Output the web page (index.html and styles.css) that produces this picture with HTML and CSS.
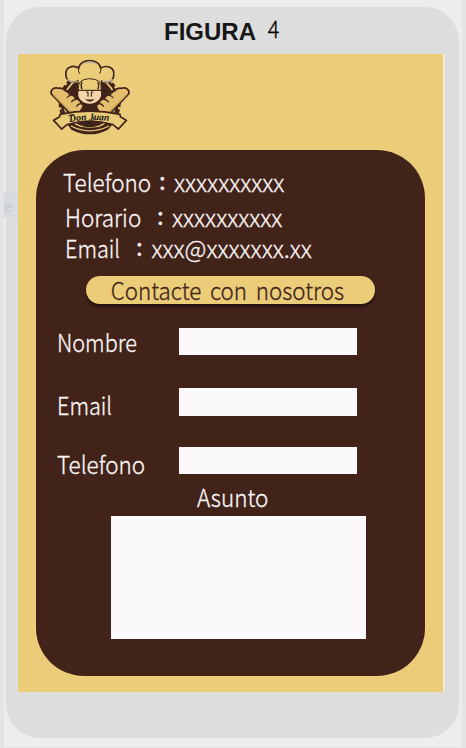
FILE: index.html
```html
<!DOCTYPE html>
<html lang="es">
<head>
<meta charset="utf-8">
<title>Don Juan</title>
<link rel="stylesheet" href="styles.css">
</head>
<body>
<div class="frame">
  <h1 class="caption">FIGURA<span class="number">4</span></h1>
  <span class="ghost">e</span>
  <main class="screen">
    <svg class="logo" viewBox="0 0 300 270" role="img">
      <circle cx="149" cy="157" r="87" fill="#42231a"/>
      <circle cx="149" cy="159" r="89" fill="none" stroke="#42231a" stroke-width="8" stroke-dasharray="12 7"/>
      <circle cx="149" cy="157" r="77" fill="none" stroke="#eacc79" stroke-width="5"/>
      <circle cx="149" cy="157" r="70" fill="#42231a"/>
      <g fill="#e4c06e" stroke="#42231a" stroke-width="5" stroke-linejoin="round">
        <path d="M34 132C30 119 43 110 56 115Q66 112 76 122Q87 122 93 134Q103 135 107 146Q119 148 124 160Q132 165 136 188L95 196Z"/>
        <path d="M266 132C270 119 257 110 244 115Q234 112 224 122Q213 122 207 134Q197 135 193 146Q181 148 176 160Q168 165 164 188L205 196Z"/>
      </g>
      <path d="M41 135L99 192M259 135L201 192" fill="none" stroke="#c9a353" stroke-width="4"/>
      <path d="M76 122q10 5 14 14M95 136q-9-1-15 8M108 148q-9 0-14 9M124 161q-11 0-15 9M224 122q-10 5-14 14M205 136q9-1 15 8M192 148q9 0 14 9M176 161q11 0 15 9" fill="none" stroke="#42231a" stroke-width="3.5"/>
      <path d="M131 163L149 186L167 163L181 187H117Z" fill="#42231a"/>
      <path d="M113 122V93C94 103 76 88 78 73C75 52 98 43 116 54C121 24 177 24 182 54C203 43 225 54 221 75C222 90 204 103 185 94V122Z" fill="#eacc79" stroke="#42231a" stroke-width="5"/>
      <path d="M83 87q11 14 30 7M217 87q-11 14-30 7M130 42q18-10 37 0" fill="none" stroke="#bdb7ac" stroke-width="4"/>
      <path d="M116 54q-3 8 3 17M182 54q3 8-3 17" fill="none" stroke="#42231a" stroke-width="3"/>
      <path d="M114 121C107 146 126 163 149 163S191 146 184 121Z" fill="#f5d6aa" stroke="#42231a" stroke-width="4"/>
      <path d="M115 121Q110 87 149 86Q190 87 183 121Z" fill="#eacc79" stroke="#42231a" stroke-width="3"/>
      <path d="M126 118Q121 106 126 96M173 118Q179 106 173 96" fill="none" stroke="#42231a" stroke-width="4"/>
      <path d="M144 127v13M154 127v13M138 127q4-2 7 0M153 127q4-2 7 0" fill="none" stroke="#211511" stroke-width="3"/>
      <path d="M134 146q15 5 30 0q-13 18-30 0Z" fill="#42231a"/>
      <path d="M77 216Q149 250 223 216L204 239Q149 267 94 239Z" fill="#42231a"/>
      <path d="M93 228Q149 257 207 228" fill="none" stroke="#eacc79" stroke-width="4"/>
      <path d="M41 211L59 200L60 193Q149 174 240 193L241 200L259 211L235 237L219 224Q149 203 81 224L65 237Z" fill="#eacc79" stroke="#42231a" stroke-width="5"/>
      <path id="name-line" d="M89 216Q149 206 225 214" fill="none"/>
      <text class="brand"><textPath href="#name-line" textLength="119" lengthAdjust="spacingAndGlyphs">Don Juan</textPath></text>
      <path d="M85 198q8-7 18-4M137 213q7 8 17 2q8-5 8-15" fill="none" stroke="#111" stroke-width="2.5"/>
    </svg>
    <section class="panel">
      <div class="info">
        <p class="row phone"><span class="key"><span class="text">Telefono</span></span><span class="colon">:</span><span class="value">xxxxxxxxxx</span></p>
        <p class="row hours"><span class="key"><span class="text">Horario</span></span><span class="colon">:</span><span class="value">xxxxxxxxxx</span></p>
        <p class="row mail"><span class="key"><span class="text">Email</span></span><span class="colon">:</span><span class="value">xxx@xxxxxxx.xx</span></p>
      </div>
      <button class="contact" type="button"><span class="text">Contacte con nosotros</span></button>
      <form class="form">
        <label class="field name"><span class="label"><span class="text">Nombre</span></span><input type="text"></label>
        <label class="field email"><span class="label"><span class="text">Email</span></span><input type="text"></label>
        <label class="field tel"><span class="label"><span class="text">Telefono</span></span><input type="text"></label>
        <label class="subject" for="subject"><span class="text">Asunto</span></label>
        <textarea id="subject"></textarea>
      </form>
    </section>
  </main>
</div>
</body>
</html>
```
FILE: styles.css
```css
* { box-sizing: border-box; }
body {
  margin: 0;
  width: 466px;
  height: 748px;
  padding: 7px 3px 0 2px;
  overflow: hidden;
  background: #ededed;
  border: solid #e4e4e4;
  border-width: 0 4px 1px;
  font-family: "Noto Sans CJK JP", "Noto Sans", sans-serif;
  font-weight: 300;
  font-size: 24px;
  line-height: 30px;
}
.frame {
  position: relative;
  width: 453px;
  height: 731px;
  padding-left: 12px;
  border-radius: 34px;
  background: #ddd;
}
.caption {
  display: flex;
  height: 47px;
  margin: 0;
  padding: 9px 0 0 146px;
  font: bold 24px/32px "Liberation Sans", sans-serif;
  color: #171717;
}
.number {
  margin: -4px 0 0 11px;
  font: 300 24px/32px "Noto Sans CJK JP", sans-serif;
  -webkit-text-stroke: 0.3px;
  transform: scaleX(0.9);
  color: #000;
}
.ghost {
  position: absolute;
  left: -2px;
  top: 186px;
  width: 14px;
  height: 25px;
  background: #d7dadf;
  color: #c6c9cc;
  font: 15px/27px "Liberation Sans", sans-serif;
}
.screen {
  display: flow-root;
  width: 427px;
  height: 637.5px;
  padding-left: 18px;
  background: #eacc79;
  border-right: 2px solid #eee9e0;
}
.logo {
  display: block;
  width: 100px;
  height: 90px;
  margin: -4px 0 9.5px 4px;
}
.brand { font: italic bold 30px "Liberation Serif", serif; fill: #111; }
.panel {
  display: flow-root;
  width: 389.3px;
  height: 526.5px;
  border-radius: 48px;
  background: #42231a;
  color: #fbf7f6;
  -webkit-text-stroke: 0.3px;
}
.row { display: flex; margin: 0; height: 30px; }
.phone { margin: 17.5px 0 0 27px; }
.hours { margin: 5px 0 0 29px; }
.mail { margin: 1px 0 0 29px; }
.text {
  display: inline-block;
  transform: scaleX(0.935);
  transform-origin: left;
}
.mail .text { transform: scaleX(0.9); }
.key, .colon { flex: none; }
.phone .key { width: 96px; }
.hours .key { width: 92px; }
.mail .key { width: 71px; }
.colon { font-weight: 400; line-height: 26px; }
.phone .colon { width: 15px; }
.hours .colon { width: 15px; }
.mail .colon { width: 15.5px; }
.contact {
  display: block;
  width: 289px;
  height: 28.5px;
  margin: 12.5px 0 0 49.5px;
  padding: 0;
  border: 0;
  border-radius: 15px;
  background: #eacc79;
  box-shadow: 0 3px 3px #26140f;
  color: #42231a;
  font: inherit;
  line-height: 23px;
}
.contact .text {
  margin-left: -5px;
  word-spacing: 4px;
  transform: scaleX(0.93);
  transform-origin: center;
}
.form { display: flow-root; }
.field {
  display: flex;
  align-items: flex-start;
  height: 27.5px;
  padding-left: 21px;
}
.label { width: 122px; }
.name .label { margin-top: -1px; }
.email .label { margin-top: 2px; }
.tel .label { margin-top: 2px; }
.name .text, .email .text { transform: scaleX(0.9); }
input, textarea {
  display: block;
  border: 0;
  border-radius: 0;
  padding: 0;
  background: #fbf9fb;
  resize: none;
  outline: 0;
}
input { width: 177.5px; height: 27.5px; }
.name { margin-top: 23.5px; }
.email { margin-top: 33px; }
.tel { margin-top: 31px; }
.subject { display: block; margin: 8px 0 0 161px; height: 30px; }
textarea { width: 255px; height: 123px; margin: 3.5px 0 0 75px; }
```
